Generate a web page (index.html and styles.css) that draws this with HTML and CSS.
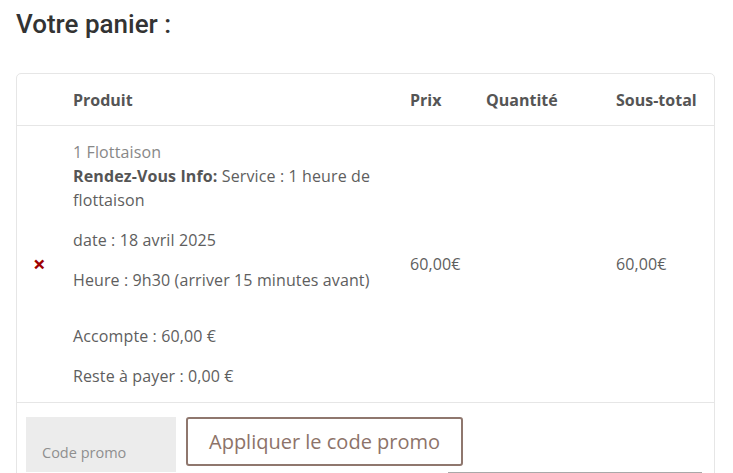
FILE: index.html
```html
<!DOCTYPE html>
<html lang="fr">
<head>
<meta charset="utf-8">
<title>Votre panier</title>
<link rel="stylesheet" href="styles.css">
</head>
<body>
<main class="page">
  <h2 class="page-title">Votre panier :</h2>
  <div class="cart-card">
    <table class="cart-table">
      <colgroup>
        <col class="c-remove">
        <col class="c-product">
        <col class="c-price">
        <col class="c-qty">
        <col class="c-subtotal">
      </colgroup>
      <thead>
        <tr>
          <th class="th-remove"></th>
          <th>Produit</th>
          <th>Prix</th>
          <th>Quantité</th>
          <th>Sous-total</th>
        </tr>
      </thead>
      <tbody>
        <tr class="item-row">
          <td class="remove-cell"><a class="remove" href="#" aria-label="Retirer">×</a></td>
          <td class="product-cell">
            <a class="product-name" href="#">1 Flottaison</a>
            <div class="meta-line"><strong>Rendez-Vous Info:</strong> Service : 1 heure de flottaison</div>
            <p class="meta-p">date : 18 avril 2025</p>
            <p class="meta-p">Heure : 9h30 (arriver 15 minutes avant)</p>
            <p class="meta-p meta-gap">Accompte : 60,00 €</p>
            <p class="meta-p">Reste à payer : 0,00 €</p>
          </td>
          <td class="num-cell">60,00€</td>
          <td class="num-cell"></td>
          <td class="num-cell">60,00€</td>
        </tr>
        <tr class="actions-row">
          <td colspan="5" class="actions-cell">
            <div class="coupon">
              <input class="coupon-input" type="text" placeholder="Code promo">
              <button class="coupon-btn" type="button">Appliquer le code promo</button>
            </div>
            <div class="update-wrap">
              <div class="update-btn" aria-label="Mettre à jour le panier"></div>
            </div>
          </td>
        </tr>
      </tbody>
    </table>
  </div>
</main>
</body>
</html>
```

FILE: styles.css
```css
html, body {
  margin: 0;
  padding: 0;
  background: #ffffff;
  overflow: hidden;
}

body {
  font-family: "Open Sans", "Liberation Sans", sans-serif;
  font-size: 16px;
  line-height: 24px;
  color: #5e5e5e;
}

.page {
  padding: 0 18px 0 16px;
}

.page-title {
  margin: 0;
  padding-top: 6px;
  font-family: Roboto, "Liberation Sans", sans-serif;
  font-weight: 500;
  font-size: 26px;
  line-height: 36px;
  color: #333333;
}

.cart-card {
  margin-top: 31px;
  border: 1px solid #e6e6e6;
  border-radius: 5px;
  overflow: hidden;
}

.cart-table {
  width: 100%;
  border-collapse: collapse;
  table-layout: fixed;
}

.c-remove { width: 44px; }
.c-product { width: 337px; }
.c-price { width: 76px; }
.c-qty { width: 130px; }
.c-subtotal { width: auto; }

.cart-table th {
  height: 51px;
  padding: 0 12px;
  text-align: left;
  font-weight: 700;
  font-size: 16px;
  color: #555555;
  border-bottom: 1px solid #e6e6e6;
  vertical-align: middle;
}

.item-row td {
  vertical-align: middle;
  border-bottom: 1px solid #e6e6e6;
  letter-spacing: 0.12px;
}

.remove-cell {
  padding: 0 0 0 16px;
}

.remove {
  display: inline-block;
  color: #a00000;
  text-decoration: none;
  font-weight: 700;
  font-size: 22px;
  line-height: 24px;
}

.product-cell {
  padding: 14px 12px 14px 12px;
}

.product-name {
  display: block;
  color: #888888;
  text-decoration: none;
}

.meta-line strong {
  font-weight: 700;
  color: #555555;
}

.meta-p {
  margin: 16px 0 0;
}

.meta-gap {
  margin-top: 32px;
}

.num-cell {
  padding: 0 12px;
}

.actions-cell {
  padding: 14px 12px 0 9px;
}

.coupon {
  display: flex;
  align-items: flex-start;
  gap: 10px;
}

.coupon-input {
  box-sizing: border-box;
  width: 150px;
  height: 55px;
  margin: 0;
  padding: 25px 16px 9px;
  border: 0;
  border-radius: 0;
  background: #ececec;
  font-family: "Open Sans", "Liberation Sans", sans-serif;
  font-size: 14.5px;
  line-height: 20px;
  color: #555555;
  outline: none;
}

.coupon-input::placeholder {
  color: #8f8f8f;
}

.coupon-btn {
  box-sizing: border-box;
  height: 49px;
  margin: 0;
  padding: 0 21px;
  border: 2px solid #8f776e;
  border-radius: 3px;
  background: #ffffff;
  font-family: "Open Sans", "Liberation Sans", sans-serif;
  font-size: 20px;
  color: #8d7369;
  cursor: pointer;
}

.update-wrap {
  display: flex;
  justify-content: flex-end;
}

.update-btn {
  box-sizing: border-box;
  width: 254px;
  height: 49px;
  border: 1px solid #a9a9a9;
  background: #ffffff;
}
```
